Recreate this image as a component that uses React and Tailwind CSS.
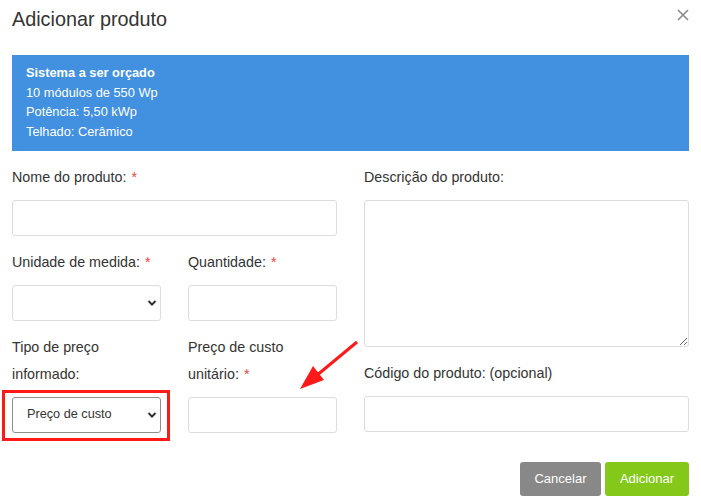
import React from 'react';

const Label = ({ children, required, className = '' }) => (
    <label className={`relative top-[-1px] block text-[14.3px] leading-[27px] text-[#333] ${className}`}>
        {children}
        {required && <span className="ml-[5px] text-[#ef4444]">*</span>}
    </label>
);

const TextInput = ({ className = '' }) => (
    <input type="text" className={`block h-[36px] w-full rounded-[3px] border border-[#ddd] bg-white ${className}`} />
);

const Chevron = () => (
    <svg className="pointer-events-none absolute right-[4px] top-1/2 -translate-y-1/2" width="10" height="8" viewBox="0 0 10 8">
        <path d="M1.5 2 L5 5.5 L8.5 2" fill="none" stroke="#333" strokeWidth="2" />
    </svg>
);

const SelectBox = ({ value, dark }) => (
    <div className="relative">
        <div
            className={`flex h-[36px] w-full items-center rounded-[3px] border bg-white pl-[14px] text-[12.7px] text-[#333] ${dark ? 'border-[#8f8f8f]' : 'border-[#ddd]'}`}
        >
            {value}
        </div>
        <Chevron />
    </div>
);

const App = () => {
    return (
        <div className="relative h-[504px] w-[701px] overflow-hidden bg-white font-['Liberation_Sans',Arial,sans-serif] text-[#333]">
            {/* header */}
            <div className="flex items-start justify-between pl-[12px] pr-[12px] pt-[5px]">
                <h1 className="text-[19.8px] leading-[28px] font-normal text-[#333]">Adicionar produto</h1>
                <svg className="mt-[4px]" width="12" height="12" viewBox="0 0 12 12">
                    <path d="M1 1 L11 11 M11 1 L1 11" stroke="#8a8a8a" strokeWidth="1.6" />
                </svg>
            </div>

            <div className="px-[12px]">
                {/* system summary */}
                <div className="mt-[22px] h-[96px] bg-[#4291e1] pl-[14px] pt-[8px] text-[12.8px] leading-[19.5px] text-white">
                    <div className="font-bold">Sistema a ser orçado</div>
                    <div>10 módulos de 550 Wp</div>
                    <div>Potência: 5,50 kWp</div>
                    <div>Telhado: Cerâmico</div>
                </div>

                {/* form */}
                <div className="mt-[14px] grid grid-cols-2 gap-x-[27px]">
                    <div>
                        <div className="mb-[14px]">
                            <Label required>Nome do produto:</Label>
                            <div className="mt-[8px]"><TextInput /></div>
                        </div>
                        <div className="mb-[14px] grid grid-cols-2 gap-x-[27px]">
                            <div>
                                <Label required>Unidade de medida:</Label>
                                <div className="mt-[8px]"><SelectBox value="" /></div>
                            </div>
                            <div>
                                <Label required>Quantidade:</Label>
                                <div className="mt-[8px]"><TextInput /></div>
                            </div>
                        </div>
                        <div className="grid grid-cols-2 gap-x-[27px]">
                            <div>
                                <Label>Tipo de preço<br />informado:</Label>
                                <div className="relative mt-[8px]">
                                    <SelectBox value="Preço de custo" dark />
                                    <div className="absolute bottom-[-8px] left-[-10px] right-[-9px] top-[-7px] border-[3px] border-[#ff1a1a]"></div>
                                </div>
                            </div>
                            <div>
                                <Label required>Preço de custo<br />unitário:</Label>
                                <div className="mt-[8px]"><TextInput /></div>
                            </div>
                        </div>
                    </div>

                    <div>
                        <div className="mb-[14px]">
                            <Label>Descrição do produto:</Label>
                            <textarea className="mt-[8px] block h-[147px] w-full resize-y rounded-[3px] border border-[#ddd] bg-white"></textarea>
                        </div>
                        <div>
                            <Label>Código do produto: (opcional)</Label>
                            <div className="mt-[8px]"><TextInput /></div>
                        </div>
                    </div>
                </div>

                {/* footer */}
                <div className="mt-[29px] flex justify-end gap-[4px]">
                    <button className="h-[34px] w-[81px] rounded-[3px] bg-[#888] text-[13px] text-white">Cancelar</button>
                    <button className="h-[34px] w-[84px] rounded-[3px] bg-[#84c91a] text-[13px] text-white">Adicionar</button>
                </div>
            </div>

            {/* annotation arrow */}
            <svg className="pointer-events-none absolute left-0 top-0" width="701" height="504">
                <line x1="357" y1="342" x2="316" y2="376" stroke="#ff1a1a" strokeWidth="3" />
                <polygon points="300,389 313,366 324,380" fill="#ff1a1a" />
            </svg>
        </div>
    );
};

export default App;
